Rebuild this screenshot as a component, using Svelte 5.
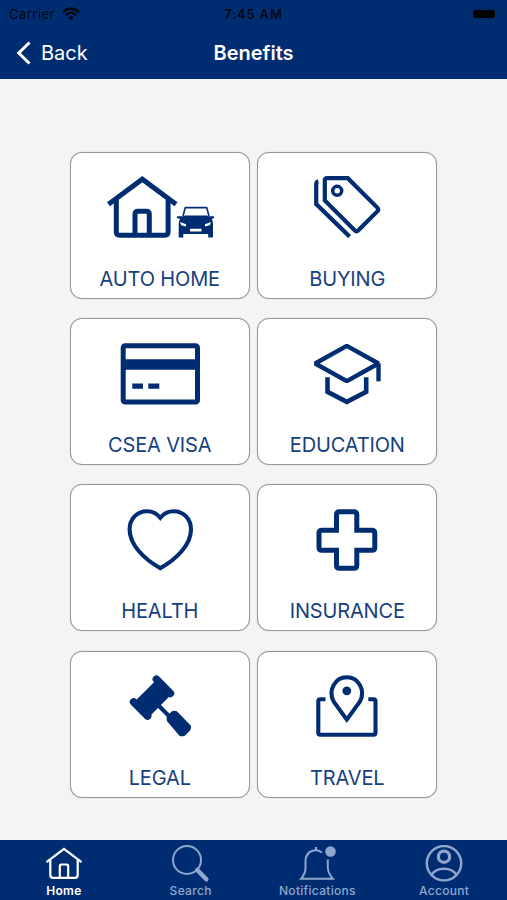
<script lang="ts">
	type Benefit = {
		id: string;
		label: string;
	};

	const benefits: Benefit[] = [
		{ id: 'home', label: 'AUTO HOME' },
		{ id: 'buying', label: 'BUYING' },
		{ id: 'visa', label: 'CSEA VISA' },
		{ id: 'education', label: 'EDUCATION' },
		{ id: 'health', label: 'HEALTH' },
		{ id: 'insurance', label: 'INSURANCE' },
		{ id: 'legal', label: 'LEGAL' },
		{ id: 'travel', label: 'TRAVEL' }
	];

	const tabs = ['Home', 'Search', 'Notifications', 'Account'];

	let activeTab = $state('Home');
</script>

<div class="screen">
	<header>
		<div class="status">
			<div class="carrier">
				<span>Carrier</span>
				<svg width="18" height="14" viewBox="0 0 18 14" fill="none" stroke="currentColor">
					<path d="M1 5.2Q9-2 17 5.2" stroke-width="2.5" />
					<path d="M3.8 8.2Q9 3.5 14.2 8.2" stroke-width="2.4" />
					<path d="M9 13.5L6 10.4Q9 8 12 10.4Z" fill="currentColor" stroke="none" />
				</svg>
			</div>
			<time>7:45 AM</time>
			<div class="battery"><i></i></div>
		</div>
		<nav class="bar">
			<button class="back">
				<svg width="16" height="24" viewBox="0 0 16 24" fill="none" stroke="currentColor" stroke-width="3">
					<path d="M13.5 1.5L2.8 12l10.7 10.5" />
				</svg>
				<span>Back</span>
			</button>
			<h1>Benefits</h1>
		</nav>
	</header>

	<main>
		{#each benefits as b (b.id)}
			<button class="card">
				<svg width="110" height="62" viewBox="0 0 110 62" fill="none" stroke="currentColor" stroke-width="5">
					{#if b.id === 'home'}
						<path d="M3.5 28.3L37.3 3.2 71 28.3" />
						<path d="M11.3 24v32q0 3.2 3.2 3.2h45.4q3.2 0 3.2-3.2V24" />
						<path d="M30 59V38.2q0-3 3-3h8.3q3 0 3 3V59" />
						<path d="M78 40l2.3-8.4h21.4L104 40" stroke-width="1.6" />
						<path
							d="M72 40.2h6l2-.8h22l2 .8h5v1.7l-2.2 1q1.2 2 1.2 5v13.6h-4.8V58H78.3v3.5h-4.6V48q0-3 1.4-5L72 42z"
							fill="currentColor"
							stroke="none"
						/>
						<path d="M75 46l6 2.2v2.3l-4.8-1.2zM106 46l-6 2.2v2.3l4.8-1.2zM85 52.8h11.5v2.6H85z" fill="#fff" stroke="none" />
					{:else if b.id === 'buying'}
						<path d="M26.3 5.2q-2.1.5-2.1 3v19.9L57.6 60.6" stroke-width="4.2" />
						<path
							d="M34.8 2.2h21L85.3 31.6q1.8 1.9 0 3.8L66.4 54.3q-1.9 1.8-3.8 0L32.8 24.4V4.2q0-2 2-2z"
							stroke-width="4.2"
						/>
						<circle cx="45.2" cy="14.8" r="4.5" stroke-width="3.5" />
					{:else if b.id === 'visa'}
						<rect x="18.2" y="2.7" width="74.3" height="56.3" rx="1.8" />
						<path d="M16 21.5h79" stroke-width="10.6" />
						<path d="M27.3 43.2H38M43.3 43.2h11" stroke-width="5.3" />
					{:else if b.id === 'education'}
						<path d="M86.5 38.3V20.5" stroke-width="4.4" />
						<path d="M54.8 2.9L23.2 20.5l31.6 17.6 31.7-17.6z" stroke-width="4.5" stroke-linejoin="bevel" />
						<path d="M35.5 34.3v14.5l19.3 10.1 19.4-10.1V34.3" stroke-width="4.6" />
					{:else if b.id === 'health'}
						<path
							d="M55.3 8.7C51.5 4 46.8 2.2 42 2.2 32 2.2 24.6 10 24.6 20.5c0 15 14.2 29.5 30.7 38.6C71.8 50 86 35.5 86 20.5 86 10 78.6 2.2 68.6 2.2c-4.8 0-9.5 1.8-13.3 6.5z"
							stroke-width="4.1"
						/>
					{:else if b.id === 'insurance'}
						<path
							d="M47.5 2.7h14.3q3 0 3 3v15.5h15q3 0 3 3v14q0 3-3 3h-15v15q0 3-3 3H47.5q-3 0-3-3v-15H30q-3 0-3-3v-14q0-3 3-3h14.5V5.7q0-3 3-3z"
						/>
					{:else if b.id === 'legal'}
						<path d="M51.4 4.2l14 14.2M28.6 27l14 14" stroke-width="7.6" stroke-linecap="round" />
						<path d="M50.3 7.5L63.5 21 44.500 40 31 26.500z" fill="currentColor" stroke-width="2" />
						<path d="M52 29l14 14" stroke-width="4" />
						<path
							d="M64.4 44.6v-2l4.2-4 2 .2L83.3 52l-.2 1.5-5 5-1.8.1z"
							fill="currentColor"
							stroke-width="5.5"
							stroke-linejoin="round"
						/>
					{:else}
						<path d="M33.5 24.3h-5.2q-2 0-2 2v31.4q0 2 2 2h53.2q2 0 2-2V26.3q0-2-2-2h-5.2" stroke-width="4.1" />
						<path d="M54.8 44.6L41.6 26.4C36 16 42.5 2.2 54.8 2.2S73.6 16 68 26.4z" stroke-width="4.1" />
						<circle cx="54.8" cy="15.8" r="4.4" fill="currentColor" stroke="none" />
					{/if}
				</svg>
				<span>{b.label}</span>
			</button>
		{/each}
	</main>

	<footer>
		{#each tabs as tab (tab)}
			<button class="tab" class:active={activeTab === tab} onclick={() => (activeTab = tab)}>
				<svg width="40" height="40" viewBox="0 0 40 40" fill="none" stroke="currentColor" stroke-width="2.2">
					{#if tab === 'Home'}
						<path d="M2.5 17.2L20 3.8l17.500 13.400" />
						<path d="M6.3 15v15q0 2.8 2.8 2.8h21.8q2.8 0 2.8-2.8V15M15.8 32.5V21q0-1.5 1.5-1.5h5.4q1.5 0 1.5 1.5v11.5" />
					{:else if tab === 'Search'}
						<circle cx="16" cy="15" r="14" stroke-width="2" />
						<path d="M26.3 25l9 9.3" stroke-width="4.5" stroke-linecap="round" />
					{:else if tab === 'Notifications'}
						<path d="M25 7.5Q21.5 5 18 5.3 8.5 6.2 8.5 17v6q0 5.5-4.5 10.8h32q-4.7-5.3-5.2-10.8v-8.5M19 5.5V2" stroke-width="2" />
						<circle cx="33.5" cy="6.5" r="5.3" fill="currentColor" stroke="none" />
					{:else}
						<circle cx="20" cy="18.2" r="17.2" stroke-width="2.4" />
						<circle cx="20" cy="11.7" r="5.6" stroke-width="3.2" />
						<path d="M7.5 29.7Q11.5 23.7 20 23.7t12.5 6" stroke-width="2.6" />
					{/if}
				</svg>
				<span>{tab}</span>
			</button>
		{/each}
	</footer>
</div>

<style>
	:global(body) {
		margin: 0;
	}
	.screen {
		height: 900px;
		display: flex;
		flex-direction: column;
		background: #f4f4f4;
		font-family: Inter, 'Liberation Sans', sans-serif;
		overflow: hidden;
	}
	button {
		border: 0;
		padding: 0;
		background: none;
		font: inherit;
		color: inherit;
	}
	svg {
		display: block;
		flex: none;
	}
	header {
		height: 79px;
		box-sizing: border-box;
		background: #002d72;
		color: #fff;
	}
	.status {
		height: 27px;
		display: grid;
		grid-template-columns: 1fr auto 1fr;
		align-items: center;
		padding: 0 10px 0 9px;
		color: #020914;
		font-size: 13px;
	}
	.carrier {
		display: flex;
		align-items: center;
		gap: 7px;
		letter-spacing: 0.5px;
	}
	time {
		padding-left: 1px;
		font-weight: 600;
		letter-spacing: 0.8px;
	}
	.battery {
		justify-self: end;
		padding: 1px;
		border: 1px solid #04265b;
		border-radius: 4px;
	}
	.battery i {
		display: block;
		width: 22px;
		height: 8px;
		border-radius: 2px;
		background: #000;
	}
	.bar {
		height: 51px;
		display: grid;
		grid-template-columns: 1fr auto 1fr;
		align-items: center;
		padding: 0 16px;
	}
	.back {
		display: flex;
		align-items: center;
		gap: 9px;
		font-size: 20px;
	}
	h1 {
		margin: 0;
		font-size: 20px;
		font-weight: 600;
	}
	main {
		flex: 1;
		display: grid;
		grid-template-columns: 180px 180px;
		grid-auto-rows: 147px;
		gap: 19.2px 7.5px;
		justify-content: center;
		align-content: start;
		padding-top: 73px;
	}
	.card {
		display: flex;
		flex-direction: column;
		align-items: center;
		box-sizing: border-box;
		padding-top: 23.4px;
		border: 1px solid #969696;
		border-radius: 12px;
		background: #fff;
		box-shadow: 0 0 1px #aaa;
		color: #002d72;
	}
	.card span {
		margin-top: 28.6px;
		font-size: 20px;
		line-height: 24px;
		letter-spacing: -0.15px;
		color: #173f80;
	}
	footer {
		height: 60px;
		display: grid;
		grid-template-columns: repeat(4, 1fr);
		background: #002d72;
	}
	.tab {
		display: flex;
		flex-direction: column;
		align-items: center;
		padding: 5px 0 0 1px;
		color: #8fa6cd;
		font-size: 12px;
		font-weight: 500;
		letter-spacing: 0.3px;
	}
	.tab span {
		margin-top: -2px;
		line-height: 16px;
	}
	.tab.active {
		color: #fff;
		font-weight: 600;
	}
</style>
